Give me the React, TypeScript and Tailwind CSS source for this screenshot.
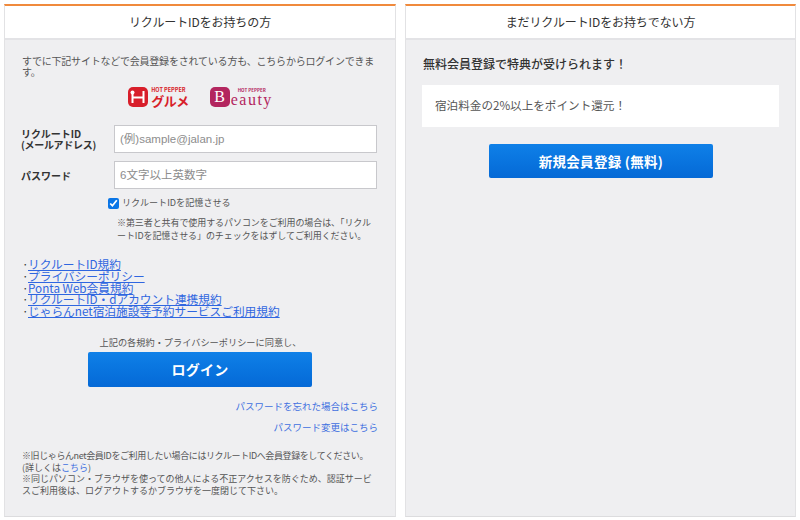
const font = { fontFamily: '"Noto Sans CJK JP", "Noto Sans", sans-serif' };
const inputFont = { fontFamily: '"Liberation Sans", "Noto Sans CJK JP", sans-serif' };

const terms = [
  "リクルートID規約",
  "プライバシーポリシー",
  "Ponta Web会員規約",
  "リクルートID・dアカウント連携規約",
  "じゃらんnet宿泊施設等予約サービスご利用規約",
];

function PanelHeader({ title }: { title: string }) {
  return (
    <div className="h-[34px] shrink-0 bg-white border-b-2 border-[#e3e3e6] flex items-center justify-center text-[12px] tracking-[-0.1px] text-[#333]">
      {title}
    </div>
  );
}

function BlueButton({ label, className }: { label: string; className: string }) {
  return (
    <button className={`block rounded-[2px] bg-gradient-to-b from-[#0f80e8] to-[#0569d6] text-white font-bold tracking-[0.3px] ${className}`}>
      {label}
    </button>
  );
}

function GourmetLogo() {
  return (
    <div className="flex items-center gap-[3px]">
      <svg width="20" height="20" viewBox="0 0 20 20">
        <rect width="20" height="20" rx="5" fill="#d81e2a" />
        <rect x="3.5" y="4" width="2" height="12" fill="#fff" />
        <rect x="14.5" y="4" width="2" height="12" fill="#fff" />
        <rect x="4" y="9.5" width="12" height="2" fill="#fff" />
        <circle cx="4.5" cy="5.5" r="2" fill="#fff" />
      </svg>
      <div className="flex flex-col text-[#d81e2a] font-bold">
        <span className="text-[5.5px] leading-[7px]">HOT PEPPER</span>
        <span className="text-[13px] leading-[13px] tracking-[-0.5px]">グルメ</span>
      </div>
    </div>
  );
}

function BeautyLogo() {
  return (
    <div className="flex items-center">
      <div className="w-5 h-5 rounded-[5px] bg-[#b3265f] text-white flex items-center justify-center text-[16px] leading-none" style={{ fontFamily: '"Liberation Serif", serif' }}>
        B
      </div>
      <div className="flex flex-col items-center text-[#b3265f] ml-[1px]">
        <span className="text-[4.5px] leading-[6px] font-bold">HOT PEPPER</span>
        <span className="text-[16px] leading-[14px] tracking-[1.5px]" style={{ fontFamily: '"Liberation Serif", serif' }}>eauty</span>
      </div>
    </div>
  );
}

export default function App() {
  return (
    <div className="w-[800px] h-[520px] bg-white flex gap-[9px] pl-1 pr-1 pt-1 pb-[3px] text-[#555] overflow-hidden" style={font}>
      <section className="w-[392px] flex flex-col bg-[#efeff1] border-t-2 border-[#f08a3c] border-x border-x-[#e2e2e4] border-b border-b-[#dcdcde]">
        <PanelHeader title="リクルートIDをお持ちの方" />
        <div className="flex-1 flex flex-col px-[17px] pt-[15px]">
          <p className="text-[10px] leading-[11px] tracking-[-0.2px]">すでに下記サイトなどで会員登録をされている方も、こちらからログインできます。</p>
          <div className="flex justify-center gap-[21px] mt-[10px] h-5 pl-[1px]">
            <GourmetLogo />
            <BeautyLogo />
          </div>
          <div className="flex items-center mt-[18px] -ml-[1px] h-7">
            <div className="w-[93px] text-[10px] leading-[11px] font-bold text-[#333]">リクルートID<br /><span className="tracking-[-0.3px]">(メールアドレス)</span></div>
            <input readOnly placeholder="(例)sample@jalan.jp" style={inputFont} className="w-[263px] h-7 bg-white border border-[#c8c8cc] px-[5px] text-[11.5px] placeholder:text-[#8d8d8d] outline-none" />
          </div>
          <div className="flex items-center mt-[8px] -ml-[1px] h-7">
            <div className="w-[93px] text-[10px] font-bold text-[#333]">パスワード</div>
            <input readOnly placeholder="6文字以上英数字" style={inputFont} className="w-[263px] h-7 bg-white border border-[#c8c8cc] px-[5px] text-[11.5px] placeholder:text-[#8d8d8d] outline-none" />
          </div>
          <label className="flex items-center gap-[3px] mt-[8px] ml-[86px] text-[9.1px] h-3">
            <input type="checkbox" defaultChecked className="w-[11px] h-[11px] accent-[#0a75e6]" />
            リクルートIDを記憶させる
          </label>
          <p className="ml-[95px] mt-[7px] text-[9px] leading-[13px] w-[262px] tracking-[-0.08px]">※第三者と共有で使用するパソコンをご利用の場合は、「リクルートIDを記憶させる」のチェックをはずしてご利用ください。</p>
          <ul className="mt-[16px] text-[11.7px] leading-[12px]">
            {terms.map((t) => (
              <li key={t} className="h-[11.8px] flex">
                <span className="w-[6px] shrink-0 text-[#333]">·</span>
                <a className="text-[#2f66e0] underline whitespace-nowrap">{t}</a>
              </li>
            ))}
          </ul>
          <p className="text-center text-[9.2px] mt-[19px] leading-[13px] pl-[1px]">上記の各規約・プライバシーポリシーに同意し、</p>
          <BlueButton label="ログイン" className="w-[224px] h-[35px] mt-[3px] ml-[66px] shrink-0 text-[14px]" />
          <div className="text-right text-[9.5px] text-[#3f6fe0] mt-[12px] leading-[14px]">パスワードを忘れた場合はこちら</div>
          <div className="text-right text-[9.5px] text-[#3f6fe0] mt-[7px] leading-[14px]">パスワード変更はこちら</div>
          <p className="mt-[16px] text-[9px] leading-[11.7px]">
            <span className="tracking-[-0.4px] whitespace-nowrap">※旧じゃらんnet会員IDをご利用したい場合にはリクルートIDへ会員登録をしてください。</span><br />
            (詳しくは<span className="text-[#3f6fe0]">こちら</span>)<br />
            ※同じパソコン・ブラウザを使っての他人による不正アクセスを防ぐため、認証サービスご利用後は、ログアウトするかブラウザを一度閉じて下さい。
          </p>
        </div>
      </section>
      <section className="w-[391px] flex flex-col bg-[#efeff1] border-t-2 border-[#f08a3c] border-x border-x-[#e2e2e4] border-b border-b-[#dcdcde]">
        <PanelHeader title="まだリクルートIDをお持ちでない方" />
        <div className="flex-1 flex flex-col px-[16px] pt-[15px]">
          <p className="ml-[1px] text-[12px] leading-[18px] font-medium text-[#333]">無料会員登録で特典が受けられます！</p>
          <div className="mt-[12px] h-[42px] bg-white flex items-center px-[13px] text-[11.6px] text-[#555]">宿泊料金の2%以上をポイント還元！</div>
          <BlueButton label="新規会員登録 (無料)" className="w-[224px] h-[34px] mt-[17px] ml-[67px] shrink-0 text-[13.5px]" />
        </div>
      </section>
    </div>
  );
}
